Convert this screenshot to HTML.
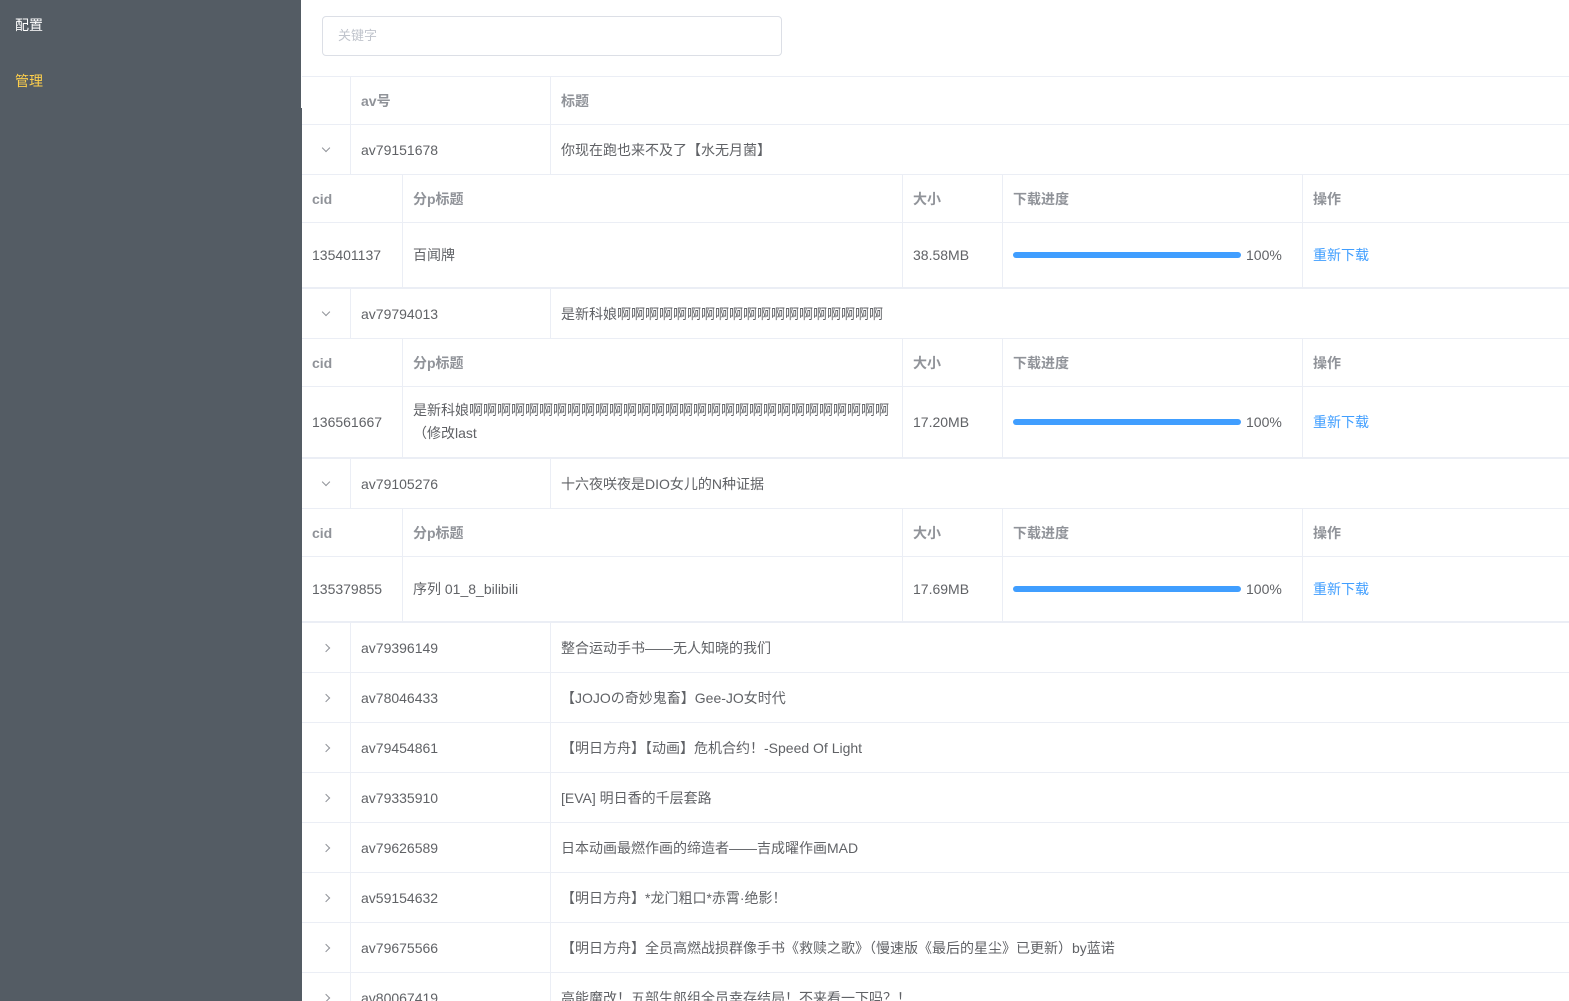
<!DOCTYPE html>
<html style="overflow:hidden"><head><meta charset="utf-8"><style>
*{box-sizing:border-box;margin:0;padding:0}
html,body{width:1569px;height:1001px;overflow:hidden}
body{background:#fff;font-family:"Liberation Sans","Noto Sans CJK SC",sans-serif;font-size:14px;color:#606266;position:relative}
.side{position:absolute;left:0;top:0;width:301px;height:1001px;background:#545c64}
.side2{position:absolute;left:301px;top:108px;width:1px;height:893px;background:#545c64}
.side div{position:absolute;left:15px;font-size:14px}
.main{position:absolute;left:302px;top:0;width:1267px;height:1001px;overflow:hidden}
.search{position:absolute;left:20px;top:16px;width:460px;height:40px;border:1px solid #dcdfe6;border-radius:4px;color:#c0c4cc;padding-left:15px;line-height:38px;font-size:13px}
.tbl{position:absolute;left:0;top:76px;width:1267px;border-top:1px solid #ebeef5}
.r{display:flex;border-bottom:1px solid #ebeef5;height:50px}
.r>div{border-right:1px solid #ebeef5;padding-left:10px;display:flex;align-items:center;white-space:nowrap;overflow:hidden;flex-shrink:0}
.r>div:last-child{border-right:none}
.h{color:#909399;font-weight:bold}
.c0{width:49px;justify-content:center;padding-left:0!important;color:#909399}
.c1{width:200px}.c2{flex:1;flex-shrink:1!important}
.n0{width:101px}.n1{width:500px}.n2{width:100px}.n3{width:300px}.n4{flex:1;flex-shrink:1!important}
.nh{height:48px}
.last{border-bottom:2px solid #ebeef5}
.bar{width:228px;height:6px;border-radius:3px;background:#409eff;margin-right:5px}
.lnk{color:#409eff}
.chev{display:inline-block;width:6px;height:6px;border-right:1px solid #909399;border-bottom:1px solid #909399}
.down{transform:rotate(45deg);margin-top:-3px}
.right{transform:rotate(-45deg)}
</style></head><body>
<div class="side"><div style="top:15px;color:#fff">配置</div><div style="top:71px;color:#ffd04b">管理</div></div>
<div class="side2"></div>
<div class="main">
<div class="search">关键字</div>
<div class="tbl">
<div class="r" style="height:48px"><div class="c0"></div><div class="c1 h">av号</div><div class="c2 h">标题</div></div>

<div class="r"><div class="c0"><span class="chev down"></span></div><div class="c1">av79151678</div><div class="c2">你现在跑也来不及了【水无月菌】</div></div>
<div class="r nh"><div class="n0 h">cid</div><div class="n1 h">分p标题</div><div class="n2 h">大小</div><div class="n3 h">下载进度</div><div class="n4 h">操作</div></div>
<div class="r last" style="height:66px"><div class="n0">135401137</div><div class="n1">百闻牌</div><div class="n2">38.58MB</div><div class="n3"><span class="bar"></span>100%</div><div class="n4 lnk">重新下载</div></div>

<div class="r"><div class="c0"><span class="chev down"></span></div><div class="c1">av79794013</div><div class="c2">是新科娘啊啊啊啊啊啊啊啊啊啊啊啊啊啊啊啊啊啊啊</div></div>
<div class="r nh"><div class="n0 h">cid</div><div class="n1 h">分p标题</div><div class="n2 h">大小</div><div class="n3 h">下载进度</div><div class="n4 h">操作</div></div>
<div class="r last" style="height:72px"><div class="n0">136561667</div><div class="n1" style="line-height:23px">是新科娘啊啊啊啊啊啊啊啊啊啊啊啊啊啊啊啊啊啊啊啊啊啊啊啊啊啊啊啊啊啊<br>（修改last</div><div class="n2">17.20MB</div><div class="n3"><span class="bar"></span>100%</div><div class="n4 lnk">重新下载</div></div>

<div class="r"><div class="c0"><span class="chev down"></span></div><div class="c1">av79105276</div><div class="c2">十六夜咲夜是DIO女儿的N种证据</div></div>
<div class="r nh"><div class="n0 h">cid</div><div class="n1 h">分p标题</div><div class="n2 h">大小</div><div class="n3 h">下载进度</div><div class="n4 h">操作</div></div>
<div class="r last" style="height:66px"><div class="n0">135379855</div><div class="n1">序列 01_8_bilibili</div><div class="n2">17.69MB</div><div class="n3"><span class="bar"></span>100%</div><div class="n4 lnk">重新下载</div></div>

<div class="r"><div class="c0"><span class="chev right"></span></div><div class="c1">av79396149</div><div class="c2">整合运动手书——无人知晓的我们</div></div>
<div class="r"><div class="c0"><span class="chev right"></span></div><div class="c1">av78046433</div><div class="c2">【JOJOの奇妙鬼畜】Gee-JO女时代</div></div>
<div class="r"><div class="c0"><span class="chev right"></span></div><div class="c1">av79454861</div><div class="c2">【明日方舟】【动画】危机合约！-Speed Of Light</div></div>
<div class="r"><div class="c0"><span class="chev right"></span></div><div class="c1">av79335910</div><div class="c2">[EVA] 明日香的千层套路</div></div>
<div class="r"><div class="c0"><span class="chev right"></span></div><div class="c1">av79626589</div><div class="c2">日本动画最燃作画的缔造者——吉成曜作画MAD</div></div>
<div class="r"><div class="c0"><span class="chev right"></span></div><div class="c1">av59154632</div><div class="c2">【明日方舟】*龙门粗口*赤霄·绝影！</div></div>
<div class="r"><div class="c0"><span class="chev right"></span></div><div class="c1">av79675566</div><div class="c2">【明日方舟】全员高燃战损群像手书《救赎之歌》（慢速版《最后的星尘》已更新）by蓝诺</div></div>
<div class="r"><div class="c0"><span class="chev right"></span></div><div class="c1">av80067419</div><div class="c2">高能魔改！五部生郎组全员幸存结局！不来看一下吗？！</div></div>
</div></div>
</body></html>
